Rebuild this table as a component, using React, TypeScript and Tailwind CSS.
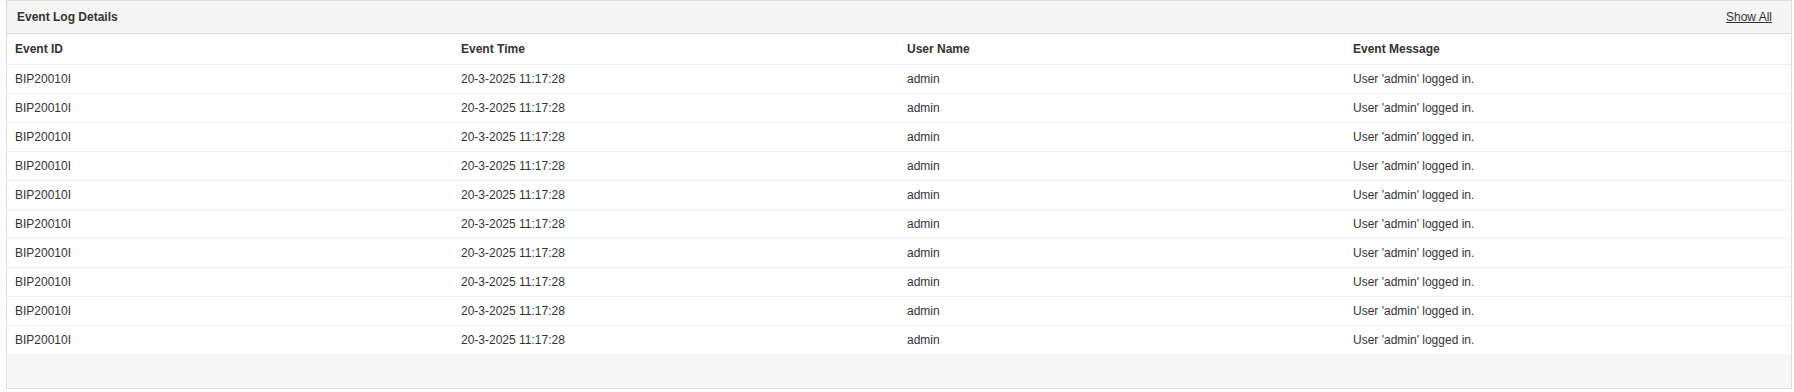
import React from "react";

const rows = Array.from({ length: 10 }, () => ({
  id: "BIP20010I",
  time: "20-3-2025 11:17:28",
  user: "admin",
  msg: "User 'admin' logged in.",
}));

export default function App() {
  return (
    <div
      className="w-[1794px] h-[392px] bg-white text-[12px] text-[#333333]"
      style={{ fontFamily: '"Liberation Sans", Arial, sans-serif' }}
    >
      <div className="ml-[6px] w-[1786px] border border-[#dddddd] bg-white">
        <div className="flex h-[33px] items-center justify-between border-b border-[#dddddd] bg-[#f5f5f5] pl-[10px] pr-[19px]">
          <span className="font-bold">Event Log Details</span>
          <a href="#" className="underline text-[#333333]">
            Show All
          </a>
        </div>
        <table className="w-full table-fixed border-collapse">
          <thead>
            <tr className="h-[30px]">
              <th className="w-1/4 px-[8px] text-left font-bold">Event ID</th>
              <th className="w-1/4 px-[8px] text-left font-bold">Event Time</th>
              <th className="w-1/4 px-[8px] text-left font-bold">User Name</th>
              <th className="w-1/4 px-[8px] text-left font-bold">Event Message</th>
            </tr>
          </thead>
          <tbody>
            {rows.map((r, i) => (
              <tr key={i} className="h-[29px] border-t border-[#f0f0f0]">
                <td className="px-[8px]">{r.id}</td>
                <td className="px-[8px]">{r.time}</td>
                <td className="px-[8px]">{r.user}</td>
                <td className="px-[8px]">{r.msg}</td>
              </tr>
            ))}
          </tbody>
        </table>
        <div className="h-[34px] bg-[#f7f7f7]" />
      </div>
    </div>
  );
}
